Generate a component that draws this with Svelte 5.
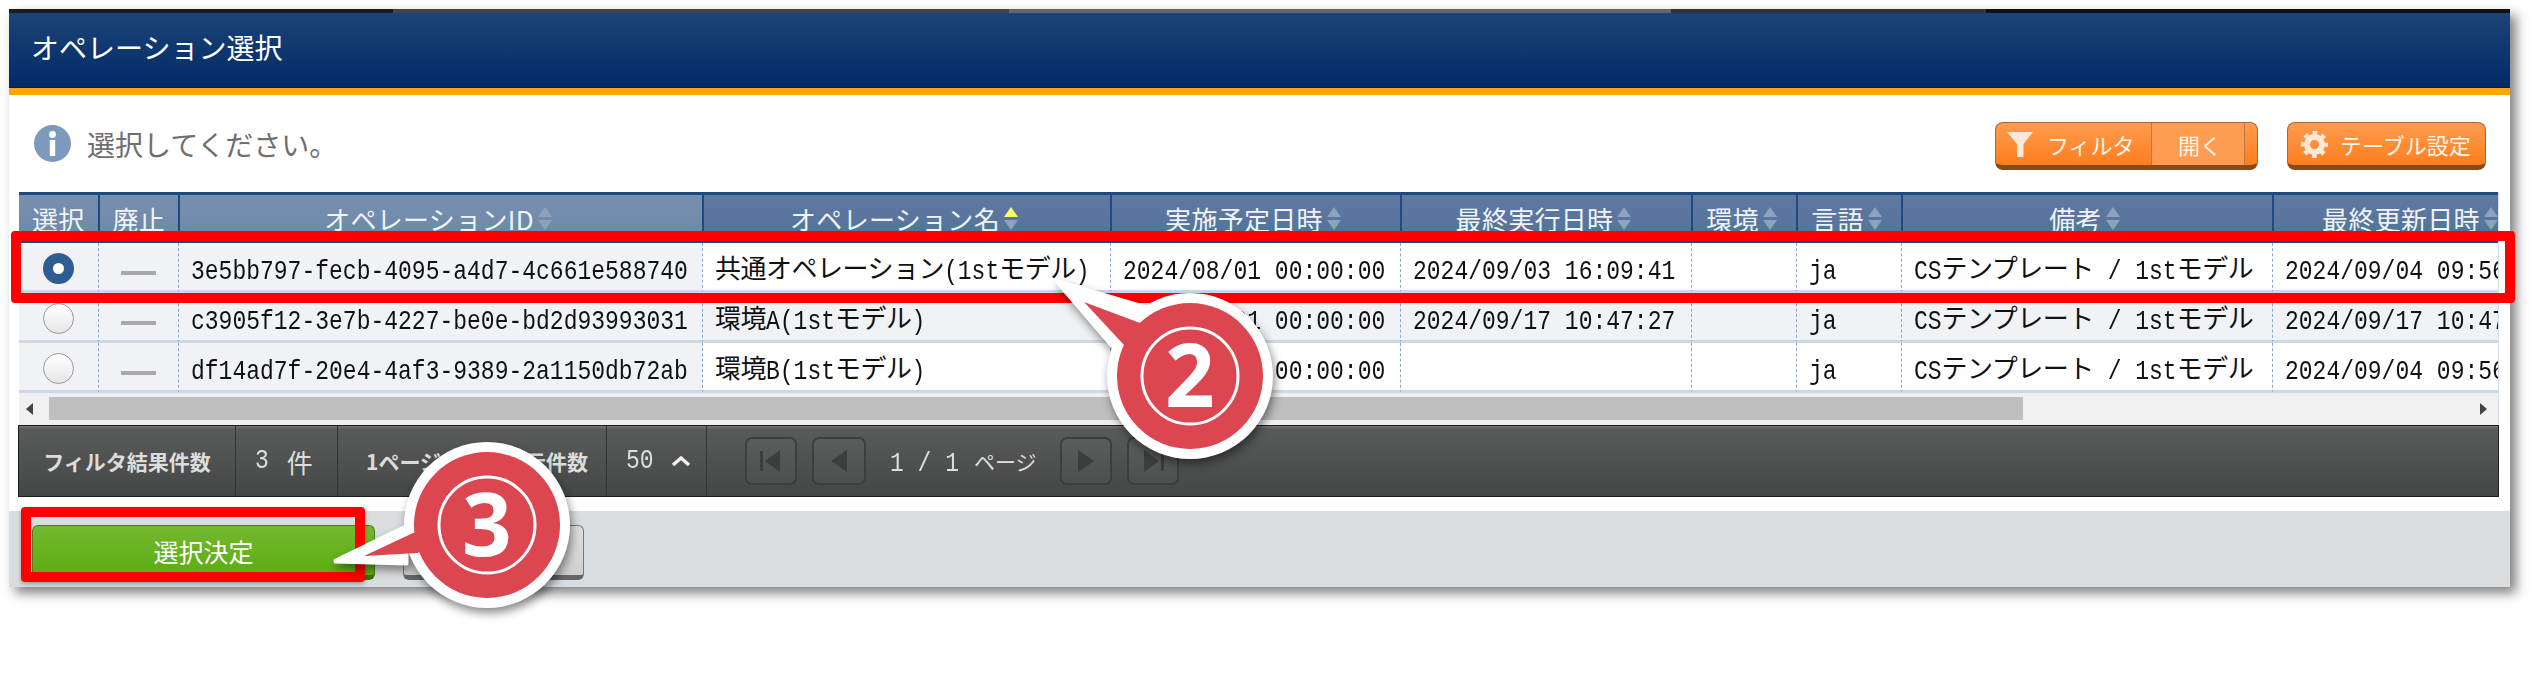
<script lang="ts">
	const columns = [
		{ label: '選択', width: 78.5, sort: false, fixed: true },
		{ label: '廃止', width: 80.5, sort: false, fixed: true },
		{ label: 'オペレーションID', width: 524, sort: true, fixed: true },
		{ label: 'オペレーション名', width: 408, sort: true, active: true },
		{ label: '実施予定日時', width: 290, sort: true },
		{ label: '最終実行日時', width: 291, sort: true },
		{ label: '環境', width: 105, sort: true },
		{ label: '言語', width: 105, sort: true },
		{ label: '備考', width: 371, sort: true },
		{ label: '最終更新日時', width: 280, sort: true }
	];

	const rows = [
		{
			selected: true,
			cells: ['3e5bb797-fecb-4095-a4d7-4c661e588740', '共通オペレーション(1stモデル)', '2024/08/01 00:00:00', '2024/09/03 16:09:41', '', 'ja', 'CSテンプレート / 1stモデル', '2024/09/04 09:56:12']
		},
		{
			selected: false,
			cells: ['c3905f12-3e7b-4227-be0e-bd2d93993031', '環境A(1stモデル)', '2024/08/01 00:00:00', '2024/09/17 10:47:27', '', 'ja', 'CSテンプレート / 1stモデル', '2024/09/17 10:47:27']
		},
		{
			selected: false,
			cells: ['df14ad7f-20e4-4af3-9389-2a1150db72ab', '環境B(1stモデル)', '2024/08/01 00:00:00', '', '', 'ja', 'CSテンプレート / 1stモデル', '2024/09/04 09:56:12']
		}
	];

	// latin stays in the narrow mono face, kana and kanji go to the CJK font
	function runs(text: string) {
		return (text.match(/[\u3000-\u9fff]+|[^\u3000-\u9fff]+/g) ?? []).map((t) => ({
			text: t,
			ja: /[\u3000-\u9fff]/.test(t)
		}));
	}
</script>

<div class="page">
	<div class="dialog">
		<div class="strip"></div>
		<header class="title">オペレーション選択</header>

		<div class="body">
			<div class="toolbar">
				<div class="message">
					<svg class="info" viewBox="0 0 37 37" aria-hidden="true">
						<circle cx="18.5" cy="18.5" r="18.5" fill="#7d99bd" />
						<circle cx="18.5" cy="9.5" r="3.4" fill="#fff" />
						<rect x="15.8" y="15" width="5.4" height="16" fill="#fff" />
					</svg>
					<span>選択してください。</span>
				</div>
				<div class="actions">
					<div class="btn-orange filter">
						<span class="filter-label">
							<svg width="26" height="25" viewBox="0 0 26 25" aria-hidden="true">
								<path d="M0 0H26L16.5 12V25H10V12Z" fill="#ffe9d6" />
							</svg>
							フィルタ
						</span>
						<span class="filter-open">開く</span>
						<span class="filter-end"></span>
					</div>
					<div class="btn-orange settings">
						<svg width="27" height="27" viewBox="0 0 27 27" aria-hidden="true">
							<circle cx="13.5" cy="13.5" r="7.5" fill="none" stroke="#ffe9d6" stroke-width="6" />
							<circle cx="13.5" cy="13.5" r="11.5" fill="none" stroke="#ffe9d6" stroke-width="4" stroke-dasharray="4.6 4.43" stroke-dashoffset="2.3" />
						</svg>
						テーブル設定
					</div>
				</div>
			</div>

			<div class="table-wrap">
				<table>
					<colgroup>
						{#each columns as col}
							<col style="width: {col.width}px" />
						{/each}
					</colgroup>
					<thead>
						<tr>
							{#each columns as col}
								<th class:fixed={col.fixed}>
									<span class="th-inner" class:sortable={col.sort}>
										{col.label}
										{#if col.sort}
											<span class="sort">
												<i class="up" class:on={col.active}></i>
												<i class="down"></i>
											</span>
										{/if}
									</span>
								</th>
							{/each}
						</tr>
					</thead>
					<tbody>
						{#each rows as row, i}
							<tr class:even={i === 1}>
								<td class="fixed center">
									<span class="radio" class:checked={row.selected}></span>
								</td>
								<td class="fixed center"><span class="dash"></span></td>
								{#each row.cells as cell, c}
									<td class:fixed={c === 0}>
										{#each runs(cell) as run}
											<span class={run.ja ? 'ja' : 'mono'}>{run.text}</span>
										{/each}
									</td>
								{/each}
							</tr>
						{/each}
					</tbody>
				</table>
				<div class="scrollbar">
					<i class="arrow-left"></i>
					<div class="thumb"></div>
					<i class="arrow-right"></i>
				</div>
			</div>

			<div class="pager-bar">
				<div class="seg label" style="width: 217px">フィルタ結果件数</div>
				<div class="seg value count"><span class="mono">3</span><span class="ja">件</span></div>
				<div class="seg label page-size">1ページあたり表示件数</div>
				<div class="seg value size">
					<span class="mono">50</span>
					<svg width="20" height="10" viewBox="0 0 20 10" aria-hidden="true">
						<path d="M2 9L10 2L18 9" fill="none" stroke="#f2f2f2" stroke-width="3.4" />
					</svg>
				</div>
				<div class="pager">
					<span class="page-btn">
						<svg width="26" height="24" viewBox="0 0 26 24" aria-hidden="true"><path d="M2 2H5V22H2ZM22 1V23L7 12Z" fill="#3c3e3e" /></svg>
					</span>
					<span class="page-btn wide">
						<svg width="18" height="24" viewBox="0 0 18 24" aria-hidden="true"><path d="M17 1V23L1 12Z" fill="#3c3e3e" /></svg>
					</span>
					<span class="page-text"><span class="mono">1 / 1</span><span class="ja">ページ</span></span>
					<span class="page-btn">
						<svg width="18" height="24" viewBox="0 0 18 24" aria-hidden="true"><path d="M1 1V23L17 12Z" fill="#3c3e3e" /></svg>
					</span>
					<span class="page-btn">
						<svg width="26" height="24" viewBox="0 0 26 24" aria-hidden="true"><path d="M4 1V23L19 12ZM21 2H24V22H21Z" fill="#3c3e3e" /></svg>
					</span>
				</div>
			</div>
		</div>

		<footer class="footer">
			<button class="confirm">選択決定</button>
			<button class="back">戻る</button>
		</footer>
	</div>

	<div class="mark row-mark"></div>
	<div class="mark button-mark"></div>

	<svg class="callouts" width="2539" height="692" viewBox="0 0 2539 692" aria-hidden="true">
		<g class="callout">
			<polygon points="1058,282 1146,308 1112,345" fill="#fff" stroke="#fff" stroke-width="5" stroke-linejoin="round" />
			<circle cx="1190" cy="376" r="83" fill="#fff" />
			<polygon points="1084,302 1140,323 1170,360 1124,345" fill="#dc4650" />
			<circle cx="1190" cy="376" r="73" fill="#dc4650" />
			<circle cx="1190" cy="376" r="48" fill="none" stroke="#fff" stroke-width="3" />
			<text x="1190" y="407" text-anchor="middle">2</text>
		</g>
		<g class="callout">
			<polygon points="336,561 406,527 406,563" fill="#fff" stroke="#fff" stroke-width="5" stroke-linejoin="round" />
			<circle cx="487" cy="525" r="83" fill="#fff" />
			<polygon points="364,556 413,533 440,525 418,553" fill="#dc4650" />
			<circle cx="487" cy="525" r="73" fill="#dc4650" />
			<circle cx="487" cy="525" r="48" fill="none" stroke="#fff" stroke-width="3" />
			<text x="487" y="556" text-anchor="middle">3</text>
		</g>
	</svg>
</div>

<style>
	:global(body) {
		background: #fff;
	}

	.page {
		position: relative;
		width: 2539px;
		height: 692px;
		padding: 9px 0 0 9px;
		box-sizing: border-box;
		overflow: hidden;
		font-family: 'Noto Sans CJK JP', sans-serif;
	}

	.dialog {
		width: 2501px;
		background: #fff;
		box-shadow: 6px 6px 11px rgba(0, 0, 0, 0.5);
	}

	.strip {
		height: 4px;
		background: linear-gradient(
			to right,
			#1c1c1c 0 384px,
			#444 384px 1000px,
			#666 1000px 1662px,
			#333 1662px 1977px,
			#111 1977px
		);
	}

	.title {
		box-sizing: border-box;
		height: 82px;
		padding: 0 0 8px 22px;
		display: flex;
		align-items: center;
		color: #fff;
		font-size: 28px;
		background: linear-gradient(#1c4478, #012a66);
		border-bottom: 7px solid #ffa500;
		box-shadow: inset 0 -1px 0 #0a1f44;
	}

	.body {
		padding: 0 11px 14px 10px;
	}

	.toolbar {
		height: 97px;
		display: flex;
		align-items: center;
		justify-content: space-between;
		padding: 0 13px 0 15px;
		box-sizing: border-box;
	}

	.message {
		display: flex;
		align-items: center;
		gap: 16px;
		font-size: 28px;
		color: #6e6e6e;
	}

	.info {
		width: 37px;
		height: 37px;
	}

	.actions {
		display: flex;
		gap: 29px;
		margin-top: 5px;
	}

	.btn-orange {
		box-sizing: border-box;
		height: 48px;
		display: flex;
		align-items: center;
		border: 1px solid #a9663a;
		border-bottom: 5px solid #8a4a17;
		border-radius: 8px;
		background: linear-gradient(#ff9b4f, #ff7e1e);
		color: #fff6ea;
		font-size: 22px;
	}

	.filter {
		width: 263px;
	}

	.filter-label {
		width: 155px;
		display: flex;
		align-items: center;
		gap: 14px;
		padding-left: 11px;
		box-sizing: border-box;
	}

	.filter-open {
		width: 94px;
		align-self: stretch;
		display: flex;
		align-items: center;
		padding-left: 26px;
		box-sizing: border-box;
		background: #ff9c54;
		border-left: 1px solid #c4763a;
		border-right: 1px solid #c4763a;
	}

	.settings {
		width: 199px;
		gap: 12px;
		padding-left: 13px;
	}

	.table-wrap {
		width: 2480px;
		overflow: hidden;
		border-right: 1px solid #d5dde8;
		box-sizing: border-box;
	}

	table {
		table-layout: fixed;
		width: 2533px;
		border-collapse: separate;
		border-spacing: 0;
	}

	th {
		box-sizing: border-box;
		height: 51px;
		padding: 0;
		border-top: 3px solid #1f4a80;
		border-bottom: 2px solid #1f4a80;
		border-left: 2px solid #1f4a80;
		background: linear-gradient(#5f7aa1, #54719a);
		color: #f0f3f8;
		font-size: 26px;
		font-weight: 400;
		letter-spacing: 0.3px;
		white-space: nowrap;
	}

	th.fixed {
		background: linear-gradient(#7890af, #6d87a8);
	}

	th:first-child {
		border-left: 0;
	}

	.th-inner {
		display: inline-flex;
		align-items: center;
		gap: 4px;
	}

	.th-inner.sortable {
		padding-right: 6px;
	}

	.sort {
		display: flex;
		flex-direction: column;
		gap: 3px;
	}

	.sort i {
		width: 0;
		height: 0;
		border-left: 7px solid transparent;
		border-right: 7px solid transparent;
	}

	.sort .up {
		border-bottom: 10px solid #8ea2bd;
	}

	.sort .up.on {
		border-bottom-color: #ffff66;
	}

	.sort .down {
		border-top: 10px solid #8ea2bd;
	}

	td {
		box-sizing: border-box;
		height: 50px;
		padding: 0 0 0 12px;
		border-left: 1px dashed #8fa5c8;
		border-bottom: 3px solid #cdd8e6;
		background: #fff;
		color: #111;
		font-size: 26px;
		white-space: pre;
		overflow: hidden;
	}

	td:first-child {
		border-left: 0;
	}

	td.fixed,
	tr.even td {
		background: #f0f2f6;
	}

	td.center {
		padding: 0;
		text-align: center;
	}

	/* the screen font is a tall narrow gothic, so stretch the mono face to get there */
	.mono {
		display: inline-block;
		font-family: 'Liberation Mono', monospace;
		font-size: 23px;
		transform: scaleY(1.22);
		white-space: pre;
	}

	.ja {
		font-family: 'Noto Sans CJK JP', sans-serif;
		font-size: 26px;
		letter-spacing: -0.5px;
	}

	.radio {
		display: inline-block;
		box-sizing: border-box;
		width: 31px;
		height: 31px;
		margin-bottom: 2px;
		vertical-align: middle;
		border-radius: 50%;
		border: 1px solid #999;
		background: linear-gradient(#fff, #e6e6e6);
	}

	.radio.checked {
		border: 10px solid #2f5c92;
		background: #fff;
	}

	.dash {
		display: inline-block;
		width: 35px;
		height: 4px;
		margin-top: 4px;
		vertical-align: middle;
		background: #a9a9a9;
	}

	.scrollbar {
		height: 32px;
		display: flex;
		align-items: flex-start;
		padding-top: 4px;
		box-sizing: border-box;
		background: #f0f0f0;
		position: relative;
	}

	.thumb {
		margin-left: 30px;
		width: 1974px;
		height: 23px;
		background: #bfbfbf;
	}

	.arrow-left,
	.arrow-right {
		position: absolute;
		top: 10px;
		width: 0;
		height: 0;
		border-top: 6px solid transparent;
		border-bottom: 6px solid transparent;
	}

	.arrow-left {
		left: 7px;
		border-right: 7px solid #444;
	}

	.arrow-right {
		right: 11px;
		border-left: 7px solid #444;
	}

	.pager-bar {
		box-sizing: border-box;
		width: 2481px;
		margin-left: -1px;
		height: 72px;
		display: flex;
		border: 1px solid #1d1d1d;
		background: linear-gradient(#5a5c5b, #454746);
		box-shadow: inset 0 2px 0 #6c6e6d;
	}

	.seg {
		box-sizing: border-box;
		display: flex;
		align-items: center;
		border-right: 1px solid #333;
	}

	.label {
		justify-content: center;
		font-size: 21px;
		font-weight: 600;
		color: #dcdcdc;
	}

	.page-size {
		width: 269px;
		padding-left: 10px;
	}

	.value {
		color: #dcdcdc;
		padding-left: 19px;
	}

	.count {
		width: 102px;
	}

	.count .ja {
		margin-left: 18px;
	}

	.size {
		width: 100px;
		gap: 17px;
	}

	.pager {
		display: flex;
		align-items: center;
		gap: 15px;
		padding-left: 38px;
	}

	.page-btn {
		box-sizing: border-box;
		width: 52px;
		height: 48px;
		display: flex;
		align-items: center;
		justify-content: center;
		border: 2px solid #3d3f3e;
		border-radius: 7px;
		background: rgba(255, 255, 255, 0.03);
	}

	.page-btn.wide {
		width: 54px;
	}

	.page-text {
		width: 164px;
		padding-left: 9px;
		box-sizing: border-box;
		color: #dedede;
		white-space: nowrap;
	}

	.page-text .ja {
		margin-left: 15px;
		font-size: 21px;
		letter-spacing: 0;
	}

	.footer {
		box-sizing: border-box;
		height: 76px;
		display: flex;
		gap: 28px;
		padding: 14px 0 0 23px;
		background: #d9dde0;
	}

	.footer button {
		box-sizing: border-box;
		height: 55px;
		padding: 0;
		border-radius: 6px;
		font-family: inherit;
		font-size: 25px;
	}

	.confirm {
		width: 343px;
		padding-bottom: 6px;
		border: 1px solid #4a7a20;
		border-bottom: 5px solid #37700f;
		background: linear-gradient(#74b82e, #5aae12);
		color: #fff;
	}

	.back {
		width: 181px;
		border: 1px solid #777;
		border-bottom: 5px solid #666;
		background: linear-gradient(#e0e0e0, #cfcfcf);
		color: #333;
	}

	.mark {
		position: absolute;
		box-sizing: border-box;
		border: 10px solid #f00;
		border-radius: 4px;
	}

	.row-mark {
		left: 11px;
		top: 231px;
		width: 2504px;
		height: 72px;
	}

	.button-mark {
		left: 21px;
		top: 507px;
		width: 344px;
		height: 75px;
		box-shadow: 0 2px 4px rgba(0, 0, 0, 0.3);
	}

	.callouts {
		position: absolute;
		left: 0;
		top: 0;
		pointer-events: none;
	}

	.callout {
		filter: drop-shadow(2px 5px 5px rgba(0, 0, 0, 0.45));
	}

	.callout text {
		font-family: 'Noto Sans', sans-serif;
		font-size: 87px;
		font-weight: 700;
		fill: #fff;
	}
</style>
